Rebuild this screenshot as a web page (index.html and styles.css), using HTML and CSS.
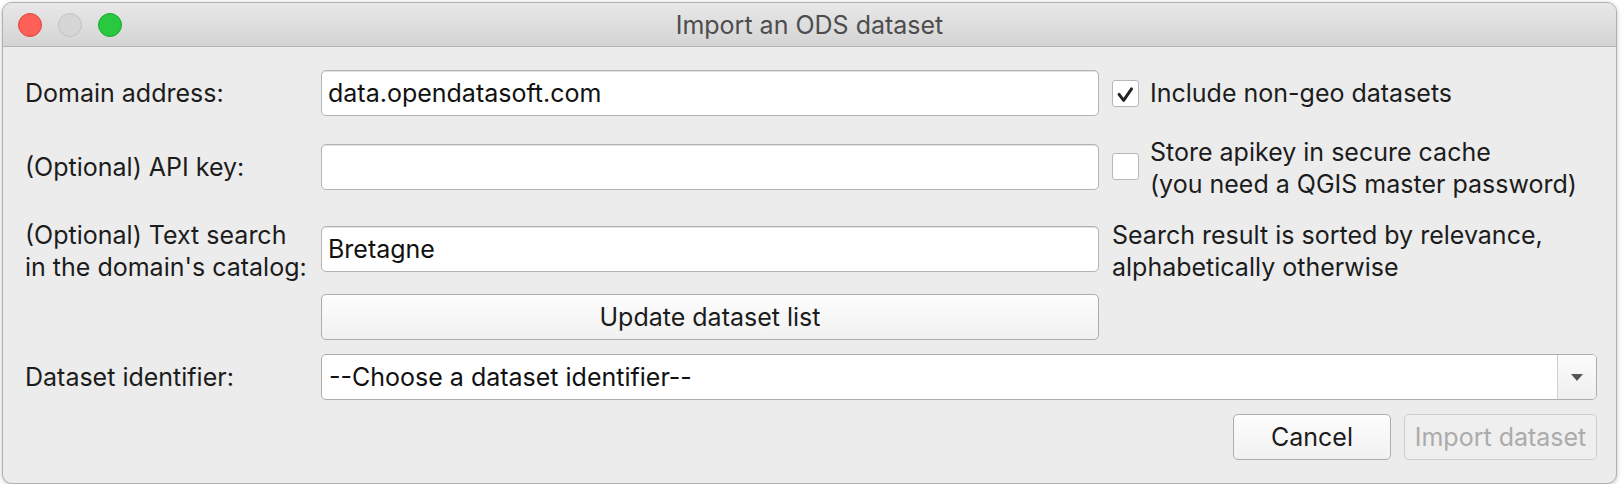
FILE: index.html
```html
<!DOCTYPE html>
<html>
<head>
<meta charset="utf-8">
<title>Import an ODS dataset</title>
<link rel="stylesheet" href="styles.css">
</head>
<body>
<div class="window">
  <div class="titlebar">
    <div class="lights">
      <span class="light red"></span>
      <span class="light gray"></span>
      <span class="light green"></span>
    </div>
    <div class="title">Import an ODS dataset</div>
    <div class="spacer"></div>
  </div>
  <div class="content">
    <div class="row r1">
      <div class="lbl">Domain address:</div>
      <div class="field">data.opendatasoft.com</div>
      <div class="opt">
        <span class="cb"><svg viewBox="0 0 27 27" width="25" height="25"><path d="M6.5 14.5 L11.5 21 L20 8.5" fill="none" stroke="#232323" stroke-width="3.2" stroke-linecap="round" stroke-linejoin="round"/></svg></span>
        <span class="opt-text">Include non-geo datasets</span>
      </div>
    </div>
    <div class="row r2">
      <div class="lbl">(Optional) API key:</div>
      <div class="field"></div>
      <div class="opt">
        <span class="cb"></span>
        <span class="opt-text multi">Store apikey in secure cache<br>(you need a QGIS master password)</span>
      </div>
    </div>
    <div class="row r3">
      <div class="lbl multi">(Optional) Text search<br>in the domain's catalog:</div>
      <div class="field">Bretagne</div>
      <div class="note multi">Search result is sorted by relevance,<br>alphabetically otherwise</div>
    </div>
    <div class="row r4">
      <div class="btn wide">Update dataset list</div>
    </div>
    <div class="row r5">
      <div class="lbl">Dataset identifier:</div>
      <div class="combo">
        <span class="combo-text">--Choose a dataset identifier--</span>
        <span class="combo-arrow"><svg viewBox="0 0 12 7" width="12" height="7"><path d="M0 0 L12 0 L6 7 Z" fill="#555"/></svg></span>
      </div>
    </div>
    <div class="buttons">
      <div class="btn cancel">Cancel</div>
      <div class="btn disabled">Import dataset</div>
    </div>
  </div>
</div>
</body>
</html>
```

FILE: styles.css
```css
* { box-sizing: border-box; }

html, body {
  margin: 0;
  padding: 0;
  background: #ffffff;
}

body {
  font-family: "Inter", "Liberation Sans", sans-serif;
  font-size: 25px;
  color: #1c1c1c;
}

.window {
  margin: 2px 0 0 2px;
  width: 1615px;
  height: 482px;
  border: 1px solid #b0b0b0;
  border-radius: 10px;
  overflow: hidden;
  background: #ececec;
  box-shadow: 0 1px 4px rgba(0,0,0,0.25);
}

.titlebar {
  height: 44px;
  display: grid;
  grid-template-columns: 1fr auto 1fr;
  align-items: center;
  background: linear-gradient(#e8e8e8, #d4d4d4);
  border-bottom: 1px solid #b5b5b5;
}

.lights {
  display: flex;
  gap: 16px;
  padding-left: 15px;
}

.light {
  width: 24px;
  height: 24px;
  border-radius: 50%;
  display: block;
}
.light.red { background: #fe5f57; border: 1px solid #e0443e; }
.light.gray { background: #d6d6d6; border: 1px solid #c2c2c2; }
.light.green { background: #28c840; border: 1px solid #1aab29; }

.title {
  font-size: 25px;
  color: #4d4d4d;
  white-space: nowrap;
}

.content {
  padding: 23px 19px 0 22px;
}

.row {
  display: grid;
  grid-template-columns: 283px 778px 485px;
  grid-template-rows: 46px;
  column-gap: 13px;
  align-items: center;
}

.r2 { margin-top: 28px; }
.r3 { margin-top: 36px; }
.r4 { margin-top: 22px; }
.r5 { margin-top: 14px; }

.lbl { white-space: nowrap; }

.multi {
  line-height: 32px;
  white-space: nowrap;
}

.r3 .lbl, .r3 .note { align-self: start; margin-top: -7px; }

.field {
  height: 46px;
  background: #ffffff;
  border: 1px solid #b3b3b3;
  border-radius: 5px;
  box-shadow: inset 0 1px 0 #e2e2e2;
  padding: 0 6px;
  display: flex;
  align-items: center;
  color: #111;
}

.opt {
  display: flex;
  align-items: center;
  gap: 11px;
}
.r2 .opt { align-items: start; align-self: start; }
.r2 .cb { margin-top: 9px; }
.r2 .opt-text { margin-top: -8px; }

.cb {
  width: 27px;
  height: 27px;
  flex: none;
  background: #ffffff;
  border: 1px solid #b8b8b8;
  border-radius: 3px;
  display: flex;
  align-items: center;
  justify-content: center;
}

.btn {
  height: 46px;
  border: 1px solid #adadad;
  border-radius: 5px;
  background: linear-gradient(#fdfdfd, #f1f1f1);
  display: flex;
  align-items: center;
  justify-content: center;
  color: #1c1c1c;
  white-space: nowrap;
}

.r4 .wide { grid-column: 2; }

.combo {
  grid-column: 2 / 4;
  height: 46px;
  background: #ffffff;
  border: 1px solid #adadad;
  border-radius: 5px;
  display: flex;
  overflow: hidden;
}

.combo-text {
  flex: 1;
  display: flex;
  align-items: center;
  padding-left: 7px;
  color: #111;
}

.combo-arrow {
  width: 39px;
  flex: none;
  border-left: 1px solid #cfcfcf;
  background: linear-gradient(#fbfbfb, #efefef);
  display: flex;
  align-items: center;
  justify-content: center;
}

.buttons {
  margin-top: 14px;
  display: flex;
  justify-content: flex-end;
  gap: 13px;
}

.cancel { width: 158px; }

.disabled {
  width: 193px;
  color: #ababab;
  border-color: #cdcdcd;
  background: #efefef;
}
```
